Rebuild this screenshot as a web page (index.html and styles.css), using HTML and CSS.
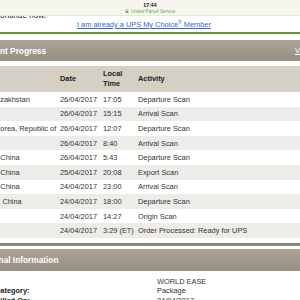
FILE: index.html
```html
<!DOCTYPE html>
<html lang="en">
<head>
    <meta charset="UTF-8">
    <meta name="viewport" content="width=device-width, initial-scale=1.0">
    <link rel="stylesheet" href="styles.css">
    <title>UPS Tracking</title>
</head>
<body>
    <div class="status">
        <div class="clock">17:44</div>
        <div class="site">
            <svg width="4" height="4" viewBox="0 0 4 4"><path d="M1 2V1.2a1 1 0 0 1 2 0V2" fill="none" stroke="#5fae46" stroke-width="0.5"/><rect x="0.6" y="1.9" width="2.8" height="2" fill="#5fae46"/></svg>
            United Parcel Service
        </div>
    </div>

    <div class="page">
        <div class="top">
            <p class="intro">continue now.</p>
            <p class="member"><a href="#">I am already a UPS My Choice<sup>®</sup> Member</a></p>
        </div>
        <div class="rule"></div>

        <section class="panel">
            <div class="panel-head">
                <h2>Shipment Progress</h2>
                <a href="#">View Details</a>
            </div>
            <table class="progress">
                <thead>
                    <tr>
                        <th class="loc">Location</th>
                        <th class="date">Date</th>
                        <th class="time">Local<br>Time</th>
                        <th>Activity</th>
                    </tr>
                </thead>
                <tbody>
                    <tr><td>Almaty, Kazakhstan</td><td>26/04/2017</td><td>17:05</td><td>Departure Scan</td></tr>
                    <tr><td></td><td>26/04/2017</td><td>15:15</td><td>Arrival Scan</td></tr>
                    <tr><td>Incheon, Korea, Republic of</td><td>26/04/2017</td><td>12:07</td><td>Departure Scan</td></tr>
                    <tr><td></td><td>26/04/2017</td><td>8:40</td><td>Arrival Scan</td></tr>
                    <tr><td>Shanghai, China</td><td>26/04/2017</td><td>5:43</td><td>Departure Scan</td></tr>
                    <tr><td>Shanghai, China</td><td>25/04/2017</td><td>20:08</td><td>Export Scan</td></tr>
                    <tr><td>Shanghai, China</td><td>24/04/2017</td><td>23:00</td><td>Arrival Scan</td></tr>
                    <tr><td>Shenzhen, China</td><td>24/04/2017</td><td>18:00</td><td>Departure Scan</td></tr>
                    <tr><td></td><td>24/04/2017</td><td>14:27</td><td>Origin Scan</td></tr>
                    <tr><td></td><td>24/04/2017</td><td>3:29 (ET)</td><td>Order Processed: Ready for UPS</td></tr>
                </tbody>
            </table>
        </section>

        <section class="panel info">
            <div class="panel-head">
                <h2>Additional Information</h2>
            </div>
            <dl class="details">
                <dt></dt><dd>WORLD EASE</dd>
                <dt>Category:</dt><dd>Package</dd>
                <dt>Billed On:</dt><dd>24/04/2017</dd>
            </dl>
        </section>
    </div>
</body>
</html>
```

FILE: styles.css
```css
html, body {
    margin: 0;
    padding: 0;
    width: 300px;
    height: 300px;
    overflow: hidden;
    background-color: #fff;
    font-family: "Liberation Sans", Arial, sans-serif;
    color: #333;
}
.status {
    position: absolute;
    top: 0;
    left: 0;
    width: 300px;
    height: 15px;
    background-color: #f6f6ef;
    border-bottom: 1px solid #e6e6dc;
    text-align: center;
}
.clock {
    font-size: 5.2px;
    font-weight: bold;
    color: #111;
    line-height: 6px;
    padding-top: 1.5px;
}
.site {
    font-size: 4.6px;
    line-height: 6px;
    color: #5fae46;
    padding-top: 1px;
}
.site svg {
    vertical-align: -0.5px;
    margin-right: 1px;
}

.page {
    margin-left: -35px;
    width: 385px;
}
.top {
    padding-top: 11px;
}
.top p {
    margin: 0;
}
.intro {
    padding-left: 31px;
    font-size: 8.2px;
    line-height: 9px;
    color: #222;
}
.member {
    padding-left: 112px;
    font-size: 7.4px;
    line-height: 9px;
}
.member a {
    color: #3366cc;
}
.member sup {
    font-size: 5px;
    line-height: 0;
}
.rule {
    margin-top: 3px;
    height: 2px;
    background-color: #5f9a24;
}

.panel {
    margin-top: 6px;
}
.panel-head {
    display: flex;
    align-items: center;
    height: 21px;
    padding-left: 5px;
    background: linear-gradient(#aca496, #968e80);
    color: #fff;
}
.panel-head h2 {
    flex: 0 0 325px;
    margin: 0;
    padding-top: 1px;
    font-size: 8.3px;
    font-weight: bold;
}
.panel-head a {
    color: #fff;
    font-size: 7.4px;
}

.progress {
    margin-top: 5px;
    width: 100%;
    border-collapse: collapse;
    table-layout: fixed;
    font-size: 7.4px;
}
.progress th {
    height: 26px;
    padding: 0;
    background-color: #d6cfc4;
    text-align: left;
    font-weight: bold;
    line-height: 10px;
    color: #222;
}
.progress th.loc {
    width: 95px;
    color: transparent;
}
.progress th.date {
    width: 43px;
}
.progress th.time {
    width: 35px;
}
.progress td {
    height: 14.6px;
    padding: 0;
    white-space: nowrap;
    overflow: hidden;
}
.progress tbody tr:nth-child(even) {
    background-color: #edece8;
}

.info {
    margin-top: 5px;
    padding-top: 3px;
    border-top: 3px solid #8e867a;
}
.info .panel-head {
    height: 22px;
}
.details {
    display: grid;
    grid-template-columns: 162px auto;
    margin: 0;
    padding: 6px 0 0 30px;
    font-size: 7.4px;
    line-height: 9.5px;
}
.details dt {
    font-weight: bold;
    color: #222;
}
.details dd {
    margin: 0;
}
```
